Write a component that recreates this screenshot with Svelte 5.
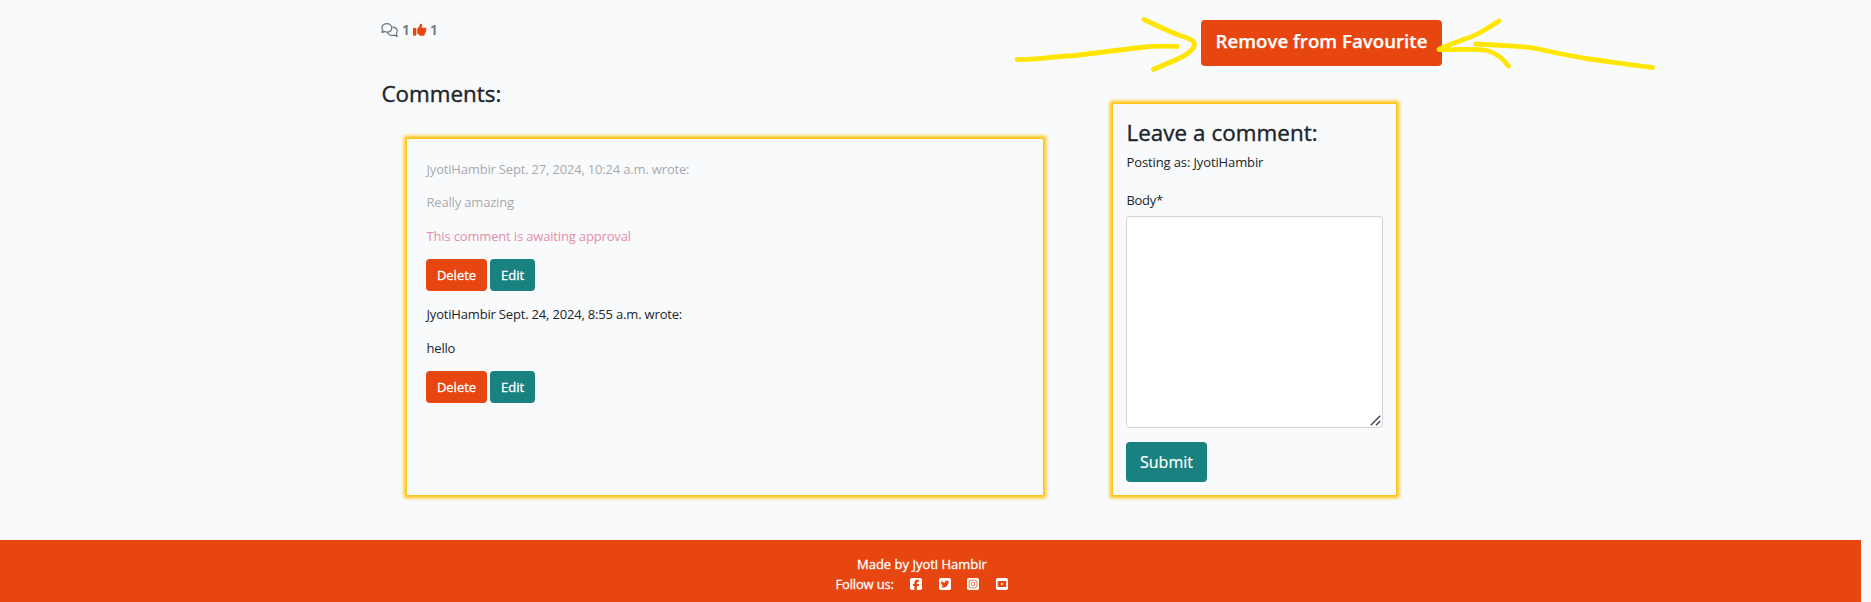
<script>
  const comments = [
    { head: 'JyotiHambir Sept. 27, 2024, 10:24 a.m. wrote:', body: 'Really amazing', pending: true },
    { head: 'JyotiHambir Sept. 24, 2024, 8:55 a.m. wrote:', body: 'hello', pending: false }
  ];
</script>

<div class="page">
  <main>
    <section class="left">
      <div class="meta">
        <svg class="bubbles" viewBox="0 0 17 14" fill="none" stroke="currentColor" stroke-width="1.25" stroke-linejoin="round">
          <path d="M1.1 8.8C2 8.1 1.9 7.4 1.4 6.6C-.1 3.4 2.3.7 5.8.7C8.6.7 10.8 2.4 10.8 4.9C10.8 7.4 8.6 9 5.8 9C4.9 9 4.2 8.8 3.5 8.5C2.9 9 1.9 9.2.7 9.2Z" />
          <path d="M11.4 4.1C14.2 4.2 16.2 6 16.2 8.2C16.2 9.3 15.8 10.1 15.2 10.8C15.2 11.7 15.6 12.4 16.4 13C15.2 13.1 14.1 12.8 13.3 12.2C10.5 13 7.5 12.1 6.5 9.6" />
        </svg>
        <span>1</span>
        <svg class="thumb" viewBox="0 0 512 512" fill="currentColor">
          <path d="M313.4 32.9c26 5.2 42.9 30.5 37.7 56.5l-2.3 11.4c-5.3 26.7-15.1 52.1-28.8 75.2H464c26.5 0 48 21.5 48 48c0 18.5-10.5 34.6-25.9 42.6C497 275.4 504 288.9 504 304c0 23.4-16.8 42.9-38.9 47.1c4.4 7.3 6.9 15.8 6.9 24.9c0 21.3-13.9 39.4-33.1 45.6c.7 3.3 1.1 6.8 1.1 10.4c0 26.5-21.5 48-48 48H294.5c-19 0-37.5-5.6-53.3-16.1l-38.5-25.7C176 420.4 160 390.4 160 358.3V247.1c0-29.2 13.3-56.7 36-75l7.4-5.9c26.5-21.2 44.6-51 51.2-84.2l2.3-11.4c5.2-26 30.5-42.9 56.5-37.7zM32 192H96c17.7 0 32 14.3 32 32V448c0 17.7-14.3 32-32 32H32c-17.7 0-32-14.3-32-32V224c0-17.7 14.3-32 32-32z" />
        </svg>
        <span>1</span>
      </div>
      <h3 class="title">Comments:</h3>
      <div class="card list">
        {#each comments as c}
          <div class="comment">
            <div class:faded={c.pending}>
              <p class="head" class:tight={c.pending}>{c.head}</p>
              <p>{c.body}</p>
            </div>
            {#if c.pending}<p class="pending">This comment is awaiting approval</p>{/if}
            <div class="actions">
              <button class="btn delete">Delete</button>
              <button class="btn edit">Edit</button>
            </div>
          </div>
        {/each}
      </div>
    </section>

    <section class="right">
      <button class="btn favourite">Remove from Favourite</button>
      <form class="card form" onsubmit={(e) => e.preventDefault()}>
        <h3 class="leave">Leave a comment:</h3>
        <p class="posting">Posting as: JyotiHambir</p>
        <label for="body">Body*</label>
        <div class="field">
          <textarea id="body"></textarea>
          <svg class="grip" viewBox="0 0 11 11" stroke="#45484b" stroke-width="1.5"><path d="M.8 10.200L10.200 .8M6 10.200L10.200 6" /></svg>
        </div>
        <button class="btn submit">Submit</button>
      </form>
    </section>
  </main>

  <footer>
    <p class="made">Made by Jyoti Hambir</p>
    <div class="follow">
      <span>Follow us:</span>
      <svg viewBox="0 32 448 448" fill="currentColor"><path d="M64 32C28.7 32 0 60.7 0 96V416c0 35.3 28.7 64 64 64h98.2V334.2H109.4V256h52.8V222.3c0-87.1 39.4-127.5 125-127.5c16.2 0 44.2 3.2 55.7 6.4V172c-6-.6-16.5-1-29.6-1c-42 0-58.2 15.9-58.2 57.2V256h83.6l-14.4 78.2H255V480H384c35.3 0 64-28.7 64-64V96c0-35.3-28.7-64-64-64H64z" /></svg>
      <svg viewBox="0 32 448 448" fill="currentColor"><path d="M64 32C28.7 32 0 60.7 0 96V416c0 35.3 28.7 64 64 64H384c35.3 0 64-28.7 64-64V96c0-35.3-28.7-64-64-64H64zM351.3 199.3c0 86.7-66 186.6-186.6 186.6c-37.2 0-71.7-10.8-100.7-29.4c5.3 .6 10.4 .8 15.8 .8c30.7 0 58.9-10.4 81.4-28c-28.8-.6-53-19.5-61.3-45.5c10.1 1.5 19.2 1.5 29.6-1.2c-30-6.1-52.5-32.5-52.5-64.4v-.8c8.7 4.9 18.9 7.9 29.6 8.3c-18.3-12.2-29.2-32.7-29.2-54.6c0-12.2 3.2-23.4 8.9-33.1c32.3 39.8 80.8 65.8 135.2 68.6c-9.3-44.5 24-80.6 64-80.6c18.9 0 35.9 7.9 47.9 20.7c14.8-2.8 29-8.3 41.6-15.8c-4.9 15.2-15.2 28-28.8 36.1c13.2-1.4 26-5.1 37.8-10.2c-8.9 13.1-20.1 24.7-32.9 34c.2 2.8 .2 5.7 .2 8.5z" /></svg>
      <svg viewBox="0 0 448 448">
        <rect width="448" height="448" rx="64" fill="currentColor" />
        <rect x="80" y="80" width="288" height="288" rx="74" fill="none" stroke="#e84610" stroke-width="27" />
        <circle cx="224" cy="224" r="61" fill="none" stroke="#e84610" stroke-width="27" />
        <circle cx="301" cy="147" r="17" fill="#e84610" />
      </svg>
      <svg viewBox="0 0 448 448">
        <rect width="448" height="448" rx="64" fill="currentColor" />
        <rect x="64" y="112" width="320" height="224" rx="50" fill="#e84610" />
        <path d="M187 170l96 54l-96 54z" fill="currentColor" />
      </svg>
    </div>
  </footer>

  <svg class="arrows" width="1871" height="90" viewBox="0 0 1871 90" fill="none" stroke="#ffe600" stroke-width="4.8" stroke-linecap="round" stroke-linejoin="round">
    <path d="M1017 59.5C1032 60 1043 57.5 1075 55.500C1098 52.500 1120 50 1140 47.500C1157 45.500 1164 46 1177 46.500" />
    <path d="M1144 19.500C1156 25 1167 31 1180 35.500C1189 39 1194 39.500 1194.500 44.500C1194 50 1187 54 1183 56.500C1174 61 1163 65 1153.500 69.500" />
    <path d="M1499 21C1485 30 1476 36 1462 40C1454 43 1444 46 1439 49.500C1460 50 1475 48 1487 50.500C1497 53 1504 60 1508.500 66" />
    <path d="M1475.500 44C1495 45.500 1520 45.500 1536 48.500C1551 52 1565 55 1586 58.500C1609 61.500 1632 65.500 1652.500 67.500" />
  </svg>
</div>

<style>
  :global(body) { background: #f9fafc; overflow: hidden; }
  .page { position: relative; width: 1871px; height: 602px; overflow: hidden; background: #f9fafc; color: #212529; font-family: "Open Sans", "Noto Sans", sans-serif; font-size: 13px; display: flex; flex-direction: column; }
  .page * { box-sizing: border-box; }
  h3, p { margin: 0; font-weight: 400; white-space: nowrap; }
  main { height: 540px; display: flex; padding-left: 381px; }
  .left { width: 732px; }
  .meta { display: flex; align-items: center; height: 20px; margin-top: 20px; color: #6c757d; font-weight: 600; font-size: 14px; }
  .meta span { width: 8px; margin-left: 4px; line-height: 18px; padding-bottom: 1px; -webkit-text-stroke: 0.2px currentColor; }
  .bubbles { width: 17px; height: 14px; }
  .thumb { width: 13.500px; height: 13.500px; color: #e84610; margin-left: 3px; }
  .meta .thumb + span { margin-left: 3.500px; }
  .title, .leave { font-size: 22.400px; line-height: 28px; -webkit-text-stroke: 0.4px currentColor; }
  .title { margin-top: 40px; padding-left: 0.500px; }
  .card { box-shadow: 0 0 3.500px 3px #ffc107; }
  .list { margin: 31px 0 0 26px; width: 636px; height: 356px; padding: 20px 19px 0 19.500px; }
  .comment p { line-height: 21px; margin-bottom: 12.500px; letter-spacing: -0.18px; }
  .comment .head { margin-bottom: 13px; }
  .comment .head + p { margin-bottom: 12px; }
  .comment .head.tight { margin-bottom: 12px; }
  .comment .head.tight + p { margin-bottom: 13px; }
  .faded { opacity: 0.38; }
  .comment .pending { color: #e38fa9; letter-spacing: -0.16px; margin-bottom: 11.500px; }
  .actions { display: flex; gap: 3px; margin: 0 0 13px -0.500px; }
  .btn { font-family: inherit; border: 0; border-radius: 4px; color: #fff; padding: 0; white-space: nowrap; display: block; }
  .actions .btn { height: 32px; font-size: 13px; -webkit-text-stroke: 0.3px currentColor; }
  .delete { background: #e84610; width: 61px; }
  .edit { background: #198180; width: 45px; }
  .favourite { background: #e84610; width: 241px; height: 46px; margin: 20px 0 0 88px; font-size: 18.700px; font-weight: 600; padding-bottom: 5px; -webkit-text-stroke: 0.25px currentColor; }
  .form { margin-top: 38px; width: 283px; height: 391px; padding: 15px 13px 0 13px; }
  .leave { padding-left: 0.500px; letter-spacing: 0.05px; }
  .posting { line-height: 20px; margin-top: 5px; padding-left: 0.500px; letter-spacing: -0.12px; }
  label { display: block; line-height: 20px; margin-top: 18px; padding-left: 0.500px; letter-spacing: -0.3px; }
  .field { position: relative; margin-top: 6px; }
  textarea { display: block; width: 257px; height: 212px; border: 1px solid #ced4da; border-radius: 4px; background: #fff; resize: none; }
  .grip { position: absolute; right: 2.500px; bottom: 2px; width: 11px; height: 11px; pointer-events: none; }
  .submit { background: #198180; width: 81px; height: 40px; margin-top: 14px; font-size: 16px; -webkit-text-stroke: 0.200px currentColor; }
  footer { width: 1861px; height: 62px; background: #e84610; color: #fff; -webkit-text-stroke: 0.3px currentColor; }
  .made { line-height: 20px; padding: 14px 0 0 857px; }
  .follow { display: flex; align-items: center; height: 20px; padding-left: 835.500px; }
  .follow span { width: 74.500px; white-space: nowrap; letter-spacing: -0.16px; }
  .follow svg { width: 12px; height: 12px; margin-right: 16.700px; flex: none; }
  .arrows { position: absolute; left: 0; top: 0; pointer-events: none; }
</style>
